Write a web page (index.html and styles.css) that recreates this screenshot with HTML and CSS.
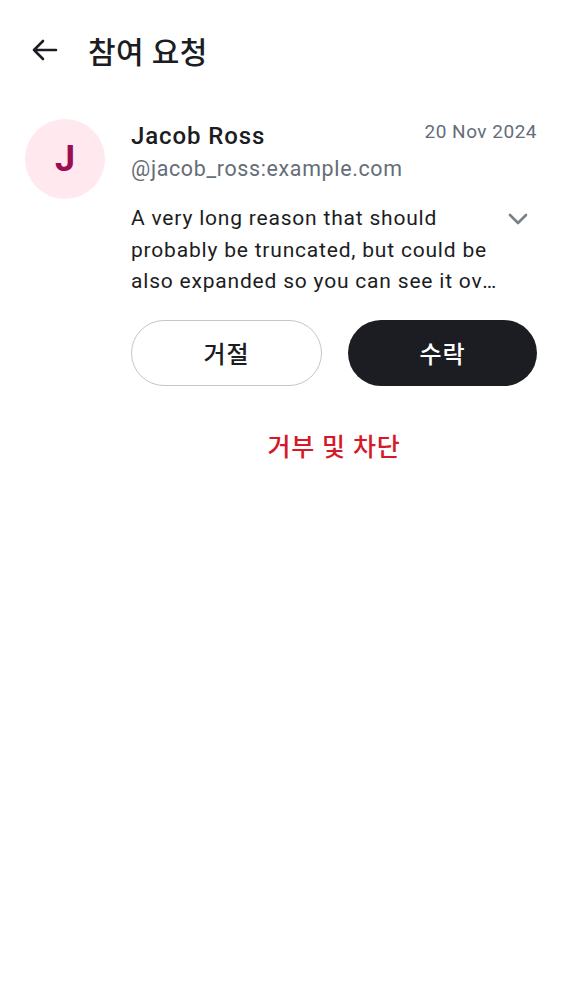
FILE: index.html
```html
<!DOCTYPE html>
<html lang="ko">
<head>
<meta charset="utf-8">
<link rel="stylesheet" href="styles.css">
</head>
<body>
<header class="topbar">
  <button class="back" aria-label="뒤로">
    <svg width="28" height="24" viewBox="0 0 28 24"><path d="M26 12H4M13 3L4 12l9 9" fill="none" stroke="#1b1d22" stroke-width="2.6" stroke-linecap="round" stroke-linejoin="round"/></svg>
  </button>
  <h1 class="title">참여 요청</h1>
</header>
<main class="request">
  <div class="avatar">J</div>
  <div class="content">
    <div class="head">
      <div class="name">Jacob Ross</div>
      <div class="date">20 Nov 2024</div>
    </div>
    <div class="handle">@jacob_ross:example.com</div>
    <div class="reason-row">
      <p class="reason"><span class="reason-head">A very long reason that should probably be truncated, but could be</span> <span class="reason-tail">also expanded so you can see it overflow and read all of it.</span></p>
      <svg class="chev" width="20" height="12" viewBox="0 0 20 12"><path d="M2 2l8 8 8-8" fill="none" stroke="#7a8089" stroke-width="2.6" stroke-linecap="round" stroke-linejoin="round"/></svg>
    </div>
    <div class="actions">
      <button class="btn outline">거절</button>
      <button class="btn filled">수락</button>
    </div>
    <button class="block">거부 및 차단</button>
  </div>
</main>
</body>
</html>
```
FILE: styles.css
```css
* { box-sizing: border-box; }
body {
  margin: 0;
  background: #fff;
  font-family: Roboto, "Noto Sans CJK KR", sans-serif;
  color: #1b1d22;
}
button { font-family: inherit; }
.topbar {
  display: flex;
  align-items: center;
  height: 56px;
  margin-top: 22px;
  padding-left: 30px;
}
.back {
  border: 0;
  background: none;
  padding: 0;
  width: 28px;
  height: 24px;
  display: flex;
}
.title {
  margin: 0 0 0 30px;
  font-size: 30px;
  font-weight: 500;
  letter-spacing: 0.4px;
}
.request {
  display: flex;
  gap: 26px;
  padding: 41px 25px 0 25px;
}
.avatar {
  flex: 0 0 80px;
  width: 80px;
  height: 80px;
  border-radius: 50%;
  background: #ffe9ee;
  color: #9b0d55;
  font-weight: 700;
  font-size: 36px;
  display: flex;
  align-items: center;
  justify-content: center;
}
.content { flex: 1; min-width: 0; }
.head {
  display: flex;
  justify-content: space-between;
  align-items: flex-start;
}
.name {
  font-size: 24px;
  font-weight: 500;
  letter-spacing: 0.9px;
  line-height: 34px;
}
.date {
  font-size: 19px;
  letter-spacing: 0.5px;
  color: #656d77;
  line-height: 26px;
}
.handle {
  font-size: 21.4px;
  letter-spacing: 0.67px;
  color: #656d77;
  line-height: 32px;
}
.reason-row {
  display: flex;
  align-items: flex-start;
  gap: 6px;
  margin-top: 18px;
}
.reason {
  flex: 1;
  min-width: 0;
  margin: 0;
  font-size: 21px;
  line-height: 31.5px;
  letter-spacing: 0.8px;
  color: #1b1d22;
}
.reason-tail {
  display: block;
  white-space: nowrap;
  overflow: hidden;
  text-overflow: ellipsis;
}
.chev { flex: 0 0 20px; margin: 10px 9px 0 0; }
.actions {
  display: flex;
  gap: 26px;
  margin-top: 22px;
}
.btn {
  flex: 1;
  height: 66px;
  border-radius: 33px;
  font-size: 24px;
  font-weight: 500;
  letter-spacing: 0.8px;
}
.outline {
  background: #fff;
  border: 1.5px solid #c0c6d0;
  color: #1b1d22;
}
.filled {
  background: #1b1d22;
  border: 0;
  color: #fff;
}
.block {
  display: block;
  width: 100%;
  margin-top: 40px;
  border: 0;
  background: none;
  color: #d51928;
  font-size: 25px;
  font-weight: 500;
  letter-spacing: 0.8px;
  padding: 0;
  line-height: 44px;
}
```
